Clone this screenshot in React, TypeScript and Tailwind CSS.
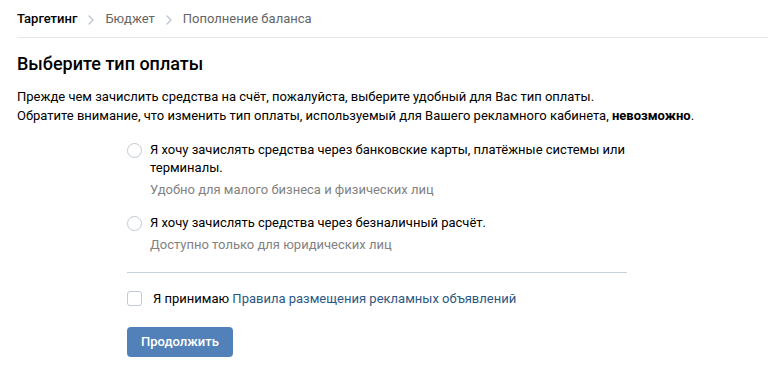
import React from 'react';

function Chevron() {
  return (
    <svg width="6" height="10" viewBox="0 0 6 10" className="mx-[11px] mt-[3px]" fill="none">
      <path d="M1 1l4 4-4 4" stroke="#b8c1cc" strokeWidth="1.2" strokeLinecap="round" strokeLinejoin="round" />
    </svg>
  );
}

function Breadcrumbs() {
  return (
    <div className="flex items-center h-[38px] border-b border-[#e7e8ec] text-[13px]">
      <span className="font-medium text-[#000]">Таргетинг</span>
      <Chevron />
      <span className="text-[#656565]">Бюджет</span>
      <Chevron />
      <span className="text-[#656565]">Пополнение баланса</span>
    </div>
  );
}

function RadioOption({ title, hint }: { title: React.ReactNode; hint: string }) {
  return (
    <label className="flex items-start cursor-pointer">
      <span className="mt-[2px] w-[15px] h-[15px] shrink-0 rounded-full border border-[#c1c9d1] bg-white" />
      <div className="ml-[8px]">
        <div className="text-[13px] leading-[18px] text-[#000]">{title}</div>
        <div className="mt-[4px] text-[13px] leading-[18px] text-[#828282]">{hint}</div>
      </div>
    </label>
  );
}

export default function App() {
  return (
    <div
      className="min-h-screen bg-white pl-[17px]"
      style={{ fontFamily: 'Roboto, "Open Sans", sans-serif' }}
    >
      <Breadcrumbs />
      <h1 className="mt-[14px] text-[18px] leading-[24px] font-medium text-[#000]">Выберите тип оплаты</h1>
      <div className="mt-[11px] text-[13px] leading-[19px] text-[#000]">
        <p>Прежде чем зачислить средства на счёт, пожалуйста, выберите удобный для Вас тип оплаты.</p>
        <p>
          Обратите внимание, что изменить тип оплаты, используемый для Вашего рекламного кабинета,{' '}
          <b className="font-bold">невозможно</b>.
        </p>
      </div>
      <div className="ml-[110px] w-[500px] mt-[16px]">
        <div className="flex flex-col gap-[15px]">
          <RadioOption
            title={<>Я хочу зачислять средства через банковские карты, платёжные системы или терминалы.</>}
            hint="Удобно для малого бизнеса и физических лиц"
          />
          <RadioOption
            title="Я хочу зачислять средства через безналичный расчёт."
            hint="Доступно только для юридических лиц"
          />
        </div>
        <div className="mt-[18px] border-t border-[#c5d0db]" />
        <label className="flex items-center mt-[16px] cursor-pointer">
          <span className="w-[15px] h-[15px] rounded-[3px] border border-[#c1c9d1] bg-white" />
          <span className="ml-[11px] text-[13px] text-[#000]">
            Я принимаю <span className="text-[#2a5885]">Правила размещения рекламных объявлений</span>
          </span>
        </label>
        <button className="mt-[18px] h-[30px] px-[14px] rounded-[4px] bg-[#5181b8] text-white text-[13px] font-medium">
          Продолжить
        </button>
      </div>
    </div>
  );
}
